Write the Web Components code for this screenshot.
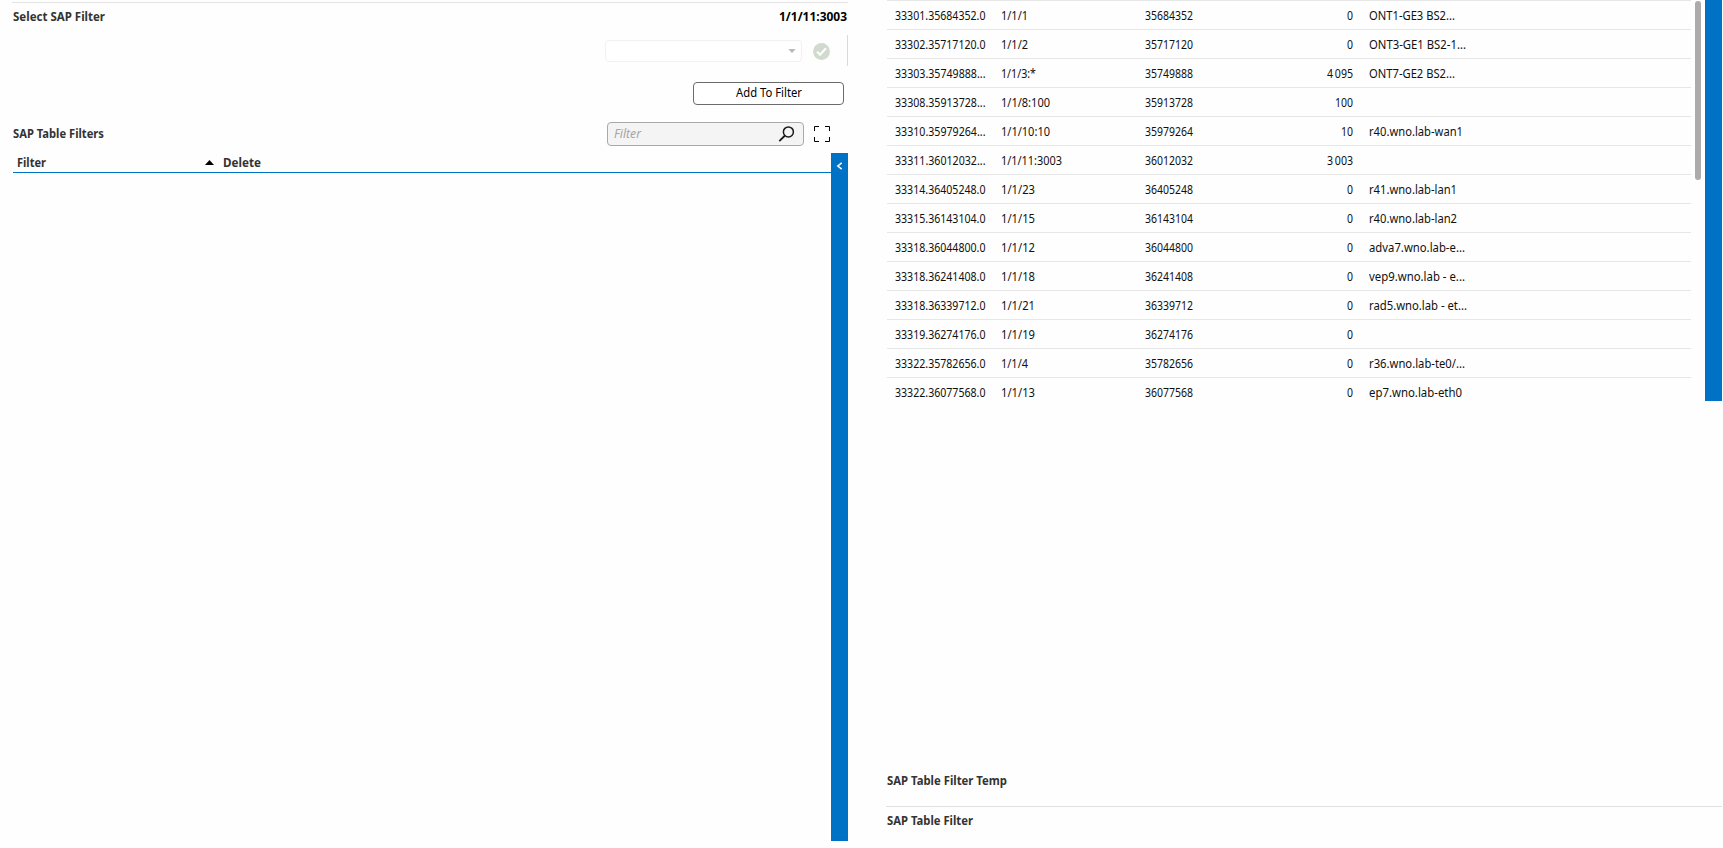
<!DOCTYPE html>
<html lang="en"><head><meta charset="utf-8"><title>SAP Filters</title>
<style>
body{margin:0;background:#fefefe;overflow:hidden}
</style></head><body>
<sap-dashboard></sap-dashboard>
<script>
const FONT = `font-family:"Noto Sans","Open Sans",sans-serif;`;
function define(name, html, setup){
  customElements.define(name, class extends HTMLElement{
    constructor(){ super(); this.attachShadow({mode:'open'}).innerHTML = html; }
    connectedCallback(){ if(setup) setup(this, this.shadowRoot); }
  });
}

/* Label that condenses its text horizontally to the width in its "w" attribute. */
define('fit-label', `<style>
:host{display:block;height:16px;line-height:16px;white-space:nowrap}
span{display:inline-block;transform-origin:0 50%}
</style><span><slot></slot></span>`, (el, root) => {
  const w = +el.getAttribute('w'), s = root.querySelector('span');
  el.style.width = w + 'px';
  s.style.transform = `scaleX(${w / s.getBoundingClientRect().width})`;
});

define('side-bar', `<style>
:host{display:block;width:17px;background:#0072c6;box-sizing:border-box}
svg{display:block}
</style><slot></slot>`);

define('filter-combo', `<style>
:host{display:flex;box-sizing:border-box;width:197px;height:22px;border:1px solid #f1f1f1;border-radius:4px;align-items:center;justify-content:flex-end;padding-right:5px;background:#fff}
svg{display:block}
</style><svg width="8" height="4"><path d="M0.3 0h7.4L4 4z" fill="#b9b9b9"/></svg>`);

define('push-button', `<style>
:host{display:flex;box-sizing:border-box;width:151px;height:23px;border:1px solid #6b6b6b;border-radius:4px;align-items:center;justify-content:center;color:#000;background:#fff;padding-bottom:1px}
</style><slot></slot>`);

define('search-box', `<style>
:host{display:flex;box-sizing:border-box;width:197px;height:24px;border:1px solid #a9a9a9;border-radius:4px;align-items:center;justify-content:space-between;padding:0 8px 0 6px;color:#a5a5a5;background:#f4f4f4;font-style:italic}
svg{display:block;margin-top:-1px}
</style><slot></slot><svg width="17" height="16" viewBox="0 0 17 16" fill="none" stroke="#1a1a1a"><circle cx="10.4" cy="5.9" r="5" stroke-width="1.5"/><path d="M7 9.5L1.3 15.1" stroke-width="1.8"/></svg>`);

define('filter-panel', `<style>
:host{display:flex;flex-direction:column;width:836px;height:839px;margin:2px 0 0 12px;border-top:1px solid #e4e4e4;color:#333}
b,.b{font-weight:700}
.title{display:flex;justify-content:space-between;padding:6px 1px 0 1px;height:26px;box-sizing:border-box}
.pick{display:flex;justify-content:flex-end;height:31px;margin-top:6px;border-right:1px solid #dadada;align-items:center}
.pick svg{margin:1px 17px 0 11px;display:block}
.add{display:flex;justify-content:flex-end;padding:16px 4px 0 0}
.tools{display:flex;align-items:center;height:24px;margin-top:17px;padding:0 18px 0 1px}
.tools search-box{margin-left:auto;margin-right:10px}
.table{display:flex;height:688px;margin-top:7px}
.head{display:flex;flex:1;box-sizing:border-box;height:20px;margin-left:1px;border-bottom:1px solid #0072c6;padding:2px 0 0 4px}
.head svg{margin:5px 9px 0 159px}
</style>
<div class="title b"><fit-label w="92">Select SAP Filter</fit-label><fit-label w="68" style="color:#000">1/1/11:3003</fit-label></div>
<div class="pick"><filter-combo></filter-combo><svg width="17" height="17" viewBox="0 0 17 17"><circle cx="8.5" cy="8.5" r="8.4" fill="#d0dacd"/><path d="M4 8.6l3 3.2 6-6.6" fill="none" stroke="#fff" stroke-width="2.1"/></svg></div>
<div class="add"><push-button><fit-label w="66">Add To Filter</fit-label></push-button></div>
<div class="tools"><fit-label class="b" w="91">SAP Table Filters</fit-label><search-box><fit-label w="27">Filter</fit-label></search-box>
<svg width="16" height="16" fill="none" stroke="#000" stroke-width="1"><path d="M.5 5V.5H5M11 .5h4.5V5M15.5 11v4.5H11M5 15.5H.5V11"/></svg></div>
<div class="table"><div class="head b"><fit-label w="29">Filter</fit-label><svg width="9" height="5"><path d="M0 5L4.5 0 9 5z" fill="#000"/></svg><fit-label w="38">Delete</fit-label></div>
<side-bar><svg width="17" height="26" fill="none" stroke="#fff" stroke-width="1.5"><path d="M10.7 9.8L6.8 13 10.7 16.2"/></svg></side-bar></div>`);

define('sap-table', `<style>
:host{display:block;width:804px;height:401px;overflow:hidden;color:#111}
.row{display:grid;grid-template-columns:106px 144px 130px 78px 1fr;height:29px;box-sizing:border-box;border-top:1px solid #e6e6e6;padding:7px 0 0 8px}
.n{justify-self:end}
.d{padding-left:16px}
</style><div id="rows"></div>`, (el, root) => {
  const rows = [
    ['33301.35684352.0','1/1/1',27,'35684352','0',6,'ONT1-GE3 BS2...',86],
    ['33302.35717120.0','1/1/2',27,'35717120','0',6,'ONT3-GE1 BS2-1...',97],
    ['33303.35749888...','1/1/3:*',35,'35749888','4\u2009095',26,'ONT7-GE2 BS2...',86],
    ['33308.35913728...','1/1/8:100',49,'35913728','100',18,'',0],
    ['33310.35979264...','1/1/10:10',49,'35979264','10',12,'r40.wno.lab-wan1',94],
    ['33311.36012032...','1/1/11:3003',61,'36012032','3\u2009003',26,'',0],
    ['33314.36405248.0','1/1/23',34,'36405248','0',6,'r41.wno.lab-lan1',88],
    ['33315.36143104.0','1/1/15',34,'36143104','0',6,'r40.wno.lab-lan2',88],
    ['33318.36044800.0','1/1/12',34,'36044800','0',6,'adva7.wno.lab-e...',96],
    ['33318.36241408.0','1/1/18',34,'36241408','0',6,'vep9.wno.lab - e...',96],
    ['33318.36339712.0','1/1/21',34,'36339712','0',6,'rad5.wno.lab - et...',98],
    ['33319.36274176.0','1/1/19',34,'36274176','0',6,'',0],
    ['33322.35782656.0','1/1/4',27,'35782656','0',6,'r36.wno.lab-te0/...',96],
    ['33322.36077568.0','1/1/13',34,'36077568','0',6,'ep7.wno.lab-eth0',93]
  ];
  root.getElementById('rows').innerHTML = rows.map(r => `<div class="row">
<fit-label w="90.5">${r[0]}</fit-label><fit-label w="${r[2]}">${r[1]}</fit-label><fit-label w="48">${r[3]}</fit-label>
<fit-label class="n" w="${r[5]}">${r[4]}</fit-label><div class="d">${r[6] ? `<fit-label w="${r[7]}">${r[6]}</fit-label>` : ''}</div></div>`).join('');
});

define('table-panel', `<style>
:host{display:flex;flex-direction:column;width:836px;color:#333}
.top{display:flex;height:401px;padding-left:1px}
.thumb{width:6px;height:179px;border-radius:3px;background:#ababab;margin:1px 4px 0}
side-bar{margin-left:auto}
.foot{font-weight:700;margin-top:372px}
.foot div{padding-left:1px;height:33px}
.foot div+div{border-top:1px solid #e0e0e0;padding-top:6px}
</style>
<div class="top"><sap-table></sap-table><div class="thumb"></div><side-bar></side-bar></div>
<div class="foot"><div><fit-label w="120">SAP Table Filter Temp</fit-label></div><div><fit-label w="86">SAP Table Filter</fit-label></div></div>`);

define('sap-dashboard', `<style>
:host{display:flex;width:1723px;height:848px;overflow:hidden;${FONT}font-size:12px;background:#fefefe;justify-content:flex-start}
table-panel{margin-left:38px}
</style><filter-panel></filter-panel><table-panel></table-panel>`);
</script></body></html>
